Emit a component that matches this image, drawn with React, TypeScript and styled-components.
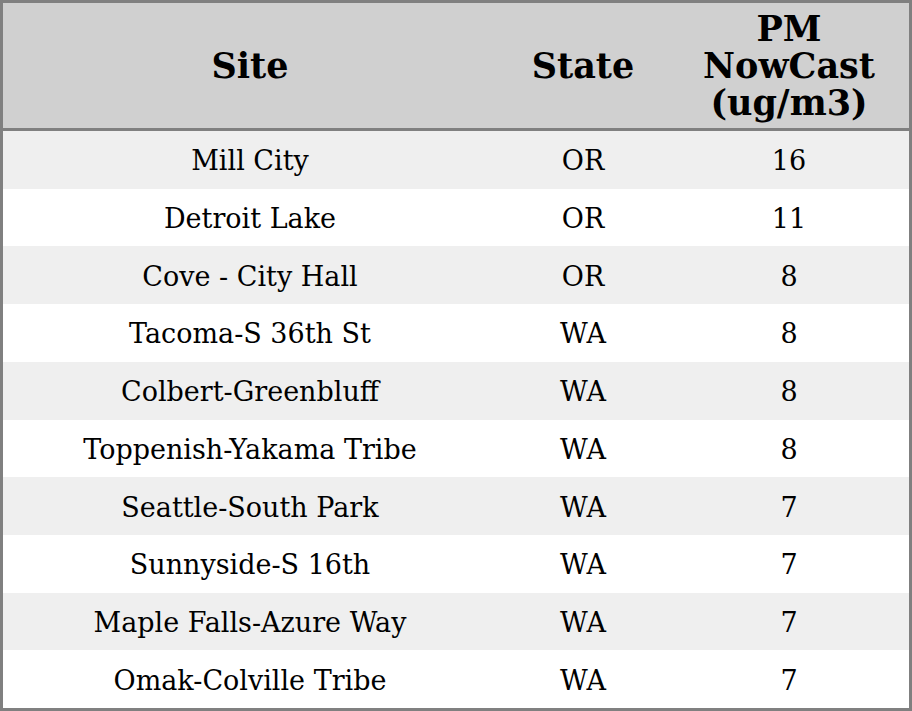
import styled, { createGlobalStyle } from "styled-components";

const GlobalStyle = createGlobalStyle`
    html, body {
        margin: 0;
        padding: 0;
        background: #ffffff;
    }
`;

const Frame = styled.div`
    width: 912px;
    height: 711px;
    box-sizing: border-box;
    border: 3px solid #808080;
    font-family: "DejaVu Serif", "Liberation Serif", serif;
    color: #000;
    display: flex;
    flex-direction: column;
`;

const Grid = styled.div`
    display: grid;
    grid-template-columns: 494px 172px 240px;
`;

const HeadRow = styled(Grid)`
    height: 125px;
    background: #d0d0d0;
    border-bottom: 3px solid #808080;
`;

const HeadCell = styled.div`
    display: flex;
    align-items: center;
    justify-content: center;
    text-align: center;
    font-size: 35px;
    font-weight: bold;
    line-height: 37px;
`;

const Row = styled(Grid)<{ $shade: boolean }>`
    flex: 1;
    background: ${(p) => (p.$shade ? "#efefef" : "#ffffff")};
`;

const Cell = styled.div`
    display: flex;
    align-items: center;
    justify-content: center;
    padding-top: 2px;
    font-size: 27px;
`;

type Reading = {
    site: string;
    state: string;
    value: number;
};

const readings: Reading[] = [
    { site: "Mill City", state: "OR", value: 16 },
    { site: "Detroit Lake", state: "OR", value: 11 },
    { site: "Cove - City Hall", state: "OR", value: 8 },
    { site: "Tacoma-S 36th St", state: "WA", value: 8 },
    { site: "Colbert-Greenbluff", state: "WA", value: 8 },
    { site: "Toppenish-Yakama Tribe", state: "WA", value: 8 },
    { site: "Seattle-South Park", state: "WA", value: 7 },
    { site: "Sunnyside-S 16th", state: "WA", value: 7 },
    { site: "Maple Falls-Azure Way", state: "WA", value: 7 },
    { site: "Omak-Colville Tribe", state: "WA", value: 7 },
];

const App = () => {
    return (
        <>
            <GlobalStyle />
            <Frame>
                <HeadRow>
                    <HeadCell>Site</HeadCell>
                    <HeadCell>State</HeadCell>
                    <HeadCell>
                        PM
                        <br />
                        NowCast
                        <br />
                        (ug/m3)
                    </HeadCell>
                </HeadRow>
                {readings.map((r, i) => (
                    <Row key={r.site} $shade={i % 2 === 0}>
                        <Cell>{r.site}</Cell>
                        <Cell>{r.state}</Cell>
                        <Cell>{r.value}</Cell>
                    </Row>
                ))}
            </Frame>
        </>
    );
};

export default App;
